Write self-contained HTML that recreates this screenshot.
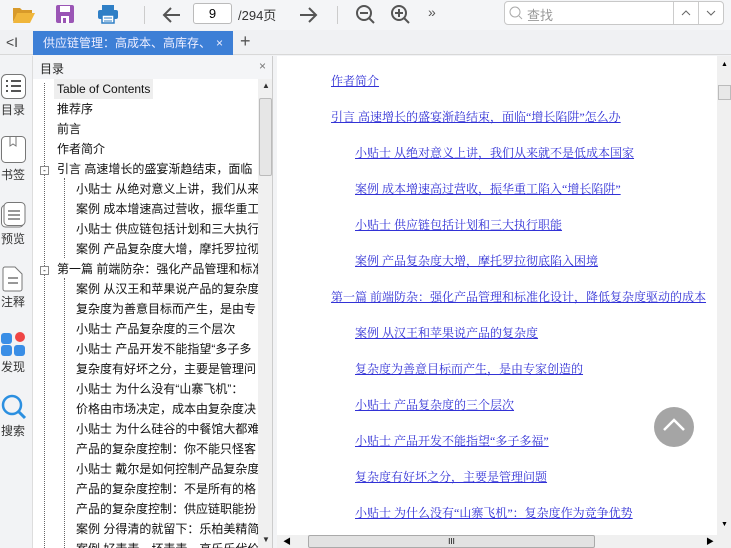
<!DOCTYPE html>
<html><head><meta charset="utf-8"><style>
*{margin:0;padding:0;box-sizing:border-box}
html,body{width:731px;height:548px;overflow:hidden}
body{background:#f2f3f5;font-family:"Liberation Sans","Noto Sans CJK SC",sans-serif;position:relative}
.a{position:absolute}
.tb{left:0;top:0;width:731px;height:30px;background:#f4f5f7}
.tabbar{left:0;top:30px;width:731px;height:25px;background:#f0f1f3;border-bottom:1px solid #d8d8d8}
.side{left:0;top:56px;width:33px;height:492px;background:#f2f3f5;border-right:1px solid #ddd}
.side .l{position:absolute;left:0;width:26px;text-align:center;font-size:12px;color:#333}
.toc{left:33px;top:56px;width:240px;height:492px;background:#fff;border-right:1px solid #ccc;overflow:hidden}
.clip{position:absolute;left:0;top:23px;width:225px;height:469px;overflow:hidden}
.toch{position:absolute;left:0;top:0;width:240px;height:23px;background:#f4f5f7;font-size:12px;padding:4px 0 0 7px;color:#222}
.row{position:absolute;font-size:12px;color:#111;white-space:nowrap;height:20px;line-height:20px}
.content{left:277px;top:56px;width:440px;height:479px;background:#fff}
.lk{position:absolute;font-family:"Liberation Serif","Noto Serif CJK SC",serif;font-size:12px;color:#3232d6;text-decoration:underline;white-space:nowrap}
</style></head><body>
<div class="a tb"></div>
<svg class="a" style="left:12px;top:4px" width="24" height="20"><path d="M1 4h7l2 2h10v3H6L1 18z" fill="#d89a2a"/><path d="M5 9h18l-5 10H1z" fill="#f0b63b"/></svg>
<svg class="a" style="left:55px;top:4px" width="20" height="20"><rect x="1" y="1" width="18" height="18" rx="2" fill="#9a55b5"/><rect x="5" y="2" width="10" height="6" fill="#fff"/><rect x="6" y="12" width="8" height="7" fill="#fff"/><rect x="8" y="14" width="3" height="5" fill="#9a55b5"/></svg>
<svg class="a" style="left:97px;top:4px" width="22" height="20"><rect x="5" y="1" width="12" height="5" fill="#2f7fc6"/><rect x="1" y="6" width="20" height="9" rx="2" fill="#2f7fc6"/><rect x="5" y="11" width="12" height="8" fill="#fff" stroke="#2f7fc6" stroke-width="1.5"/><path d="M7 14h8M7 17h8" stroke="#2f7fc6"/></svg>
<div class="a" style="left:144px;top:6px;width:1px;height:18px;background:#ccc"></div>
<svg class="a" style="left:162px;top:5px" width="20" height="20"><path d="M18 10H3M9 3l-7 7 7 7" stroke="#555" stroke-width="2" fill="none"/></svg>
<div class="a" style="left:193px;top:3px;width:39px;height:21px;border:1px solid #bbb;border-radius:3px;background:#fff;font-size:13px;text-align:center;line-height:19px">9</div>
<div class="a" style="left:238px;top:5px;font-size:13px;color:#333">/294页</div>
<svg class="a" style="left:298px;top:5px" width="20" height="20"><path d="M2 10h15M11 3l7 7-7 7" stroke="#555" stroke-width="2" fill="none"/></svg>
<div class="a" style="left:337px;top:6px;width:1px;height:18px;background:#ccc"></div>
<svg class="a" style="left:355px;top:4px" width="22" height="22"><circle cx="9" cy="9" r="7" stroke="#555" stroke-width="2" fill="none"/><path d="M5 9h8M14 14l5 5" stroke="#555" stroke-width="2"/></svg>
<svg class="a" style="left:390px;top:4px" width="22" height="22"><circle cx="9" cy="9" r="7" stroke="#555" stroke-width="2" fill="none"/><path d="M5 9h8M9 5v8M14 14l5 5" stroke="#555" stroke-width="2"/></svg>
<div class="a" style="left:428px;top:4px;font-size:14px;color:#555">»</div>
<div class="a" style="left:504px;top:1px;width:220px;height:24px;border:1px solid #c8c8c8;border-radius:4px;background:#fff"></div>
<svg class="a" style="left:509px;top:6px" width="14" height="14"><circle cx="6" cy="6" r="5" stroke="#aaa" fill="none"/><path d="M10 10l3 3" stroke="#aaa"/></svg>
<div class="a" style="left:527px;top:5px;font-size:13px;color:#999">查找</div>
<div class="a" style="left:673px;top:2px;width:1px;height:22px;background:#ccc"></div>
<div class="a" style="left:698px;top:2px;width:1px;height:22px;background:#ccc"></div>
<svg class="a" style="left:680px;top:9px" width="12" height="8"><path d="M2 6l4-4 4 4" stroke="#666" fill="none"/></svg>
<svg class="a" style="left:705px;top:9px" width="12" height="8"><path d="M2 2l4 4 4-4" stroke="#666" fill="none"/></svg>

<div class="a tabbar"></div>
<div class="a" style="left:6px;top:34px;font-size:14px;color:#444">&lt;I</div>
<div class="a" style="left:33px;top:31px;width:200px;height:24px;background:#3d7fd6;color:#eef;font-size:12px;line-height:24px;padding-left:10px;white-space:nowrap;overflow:hidden">供应链管理：高成本、高库存、<span style="position:absolute;left:183px">×</span></div>
<div class="a" style="left:240px;top:31px;font-size:18px;color:#555">+</div>

<div class="a side">
<svg class="a" style="left:1px;top:18px" width="25" height="25"><rect x="0.5" y="0.5" width="24" height="24" rx="5" fill="#fff" stroke="#777"/><path d="M5 7h2M10 7h10M5 12h2M10 12h10M5 17h2M10 17h10" stroke="#555" stroke-width="2"/></svg>
<div class="l" style="top:45px">目录</div>
<svg class="a" style="left:1px;top:80px" width="25" height="27"><rect x="0.5" y="0.5" width="24" height="26" rx="4" fill="#fff" stroke="#777"/><path d="M9 1v9l3-2 3 2V1" stroke="#777" fill="none"/></svg>
<div class="l" style="top:110px">书签</div>
<svg class="a" style="left:1px;top:146px" width="25" height="26"><rect x="0.5" y="3" width="22" height="22" rx="4" fill="#fff" stroke="#777"/><rect x="3" y="0.5" width="21" height="23" rx="4" fill="#fff" stroke="#777"/><path d="M7 9h12M7 13h12M7 17h12" stroke="#777" stroke-width="1.5"/></svg>
<div class="l" style="top:174px">预览</div>
<svg class="a" style="left:2px;top:210px" width="22" height="26"><path d="M1 3a2 2 0 012-2h10l7 7v15a2 2 0 01-2 2H3a2 2 0 01-2-2z" fill="#fff" stroke="#777"/><path d="M6 12h10M6 17h10" stroke="#777" stroke-width="1.5"/></svg>
<div class="l" style="top:237px">注释</div>
<svg class="a" style="left:1px;top:275px" width="26" height="26"><rect x="0" y="2" width="11" height="11" rx="3" fill="#3a8ee6"/><circle cx="19" cy="6" r="5" fill="#ef4545"/><rect x="0" y="14" width="11" height="11" rx="3" fill="#3a8ee6"/><rect x="13" y="14" width="11" height="11" rx="3" fill="#3a8ee6"/></svg>
<div class="l" style="top:302px">发现</div>
<svg class="a" style="left:1px;top:338px" width="26" height="28"><circle cx="11" cy="11" r="9" stroke="#2b8fe0" stroke-width="2.5" fill="none"/><path d="M18 18l6 6" stroke="#2b8fe0" stroke-width="3"/></svg>
<div class="l" style="top:366px">搜索</div>
</div>

<div class="a toc">
<div class="toch">目录<span style="position:absolute;right:7px;top:3px;color:#777">×</span></div>
<div class="clip">
<div class="a" style="left:11px;top:4px;height:465px;border-left:1px dotted #666"></div>
<div class="a" style="left:31px;top:99px;height:80px;border-left:1px dotted #666"></div>
<div class="a" style="left:31px;top:199px;height:270px;border-left:1px dotted #666"></div>
<div class="row" style="left:21px;top:0px;background:#eee;padding:0 3px">Table of Contents</div>
<div class="row" style="left:24px;top:20px">推荐序</div>
<div class="row" style="left:24px;top:40px">前言</div>
<div class="row" style="left:24px;top:60px">作者简介</div>
<div class="row" style="left:24px;top:80px">引言 高速增长的盛宴渐趋结束，面临</div>
<div class="row" style="left:43px;top:100px">小贴士 从绝对意义上讲，我们从来</div>
<div class="row" style="left:43px;top:120px">案例 成本增速高过营收，振华重工</div>
<div class="row" style="left:43px;top:140px">小贴士 供应链包括计划和三大执行</div>
<div class="row" style="left:43px;top:160px">案例 产品复杂度大增，摩托罗拉彻</div>
<div class="row" style="left:24px;top:180px">第一篇 前端防杂：强化产品管理和标准</div>
<div class="row" style="left:43px;top:200px">案例 从汉王和苹果说产品的复杂度</div>
<div class="row" style="left:43px;top:220px">复杂度为善意目标而产生，是由专</div>
<div class="row" style="left:43px;top:240px">小贴士 产品复杂度的三个层次</div>
<div class="row" style="left:43px;top:260px">小贴士 产品开发不能指望“多子多</div>
<div class="row" style="left:43px;top:280px">复杂度有好坏之分，主要是管理问</div>
<div class="row" style="left:43px;top:300px">小贴士 为什么没有“山寨飞机”：</div>
<div class="row" style="left:43px;top:320px">价格由市场决定，成本由复杂度决</div>
<div class="row" style="left:43px;top:340px">小贴士 为什么硅谷的中餐馆大都难</div>
<div class="row" style="left:43px;top:360px">产品的复杂度控制：你不能只怪客</div>
<div class="row" style="left:43px;top:380px">小贴士 戴尔是如何控制产品复杂度</div>
<div class="row" style="left:43px;top:400px">产品的复杂度控制：不是所有的格</div>
<div class="row" style="left:43px;top:420px">产品的复杂度控制：供应链职能扮</div>
<div class="row" style="left:43px;top:440px">案例 分得清的就留下：乐柏美精简</div>
<div class="row" style="left:43px;top:460px">案例 好麦麦，坏麦麦，高乐乐代价</div>
<div class="a" style="left:7px;top:87px;width:9px;height:9px;border:1px solid #888;background:#fff;font-size:8px;line-height:7px;text-align:center">-</div>
<div class="a" style="left:7px;top:187px;width:9px;height:9px;border:1px solid #888;background:#fff;font-size:8px;line-height:7px;text-align:center">-</div>
</div>
<div class="a" style="left:225px;top:23px;width:15px;height:469px;background:#f0f0f0"></div>
<div class="a" style="left:226px;top:42px;width:13px;height:78px;background:#e6e6e6;border:1px solid #bbb;border-radius:2px"></div>
<div class="a" style="left:229px;top:25px;font-size:8px;color:#333">▲</div>
<div class="a" style="left:229px;top:479px;font-size:8px;color:#333">▼</div>
</div>

<div class="a content">
<div class="lk" style="left:54px;top:16px">作者简介</div>
<div class="lk" style="left:54px;top:52px">引言  高速增长的盛宴渐趋结束，面临“增长陷阱”怎么办</div>
<div class="lk" style="left:78px;top:88px">小贴士  从绝对意义上讲，我们从来就不是低成本国家</div>
<div class="lk" style="left:78px;top:124px">案例  成本增速高过营收，振华重工陷入“增长陷阱”</div>
<div class="lk" style="left:78px;top:160px">小贴士  供应链包括计划和三大执行职能</div>
<div class="lk" style="left:78px;top:196px">案例  产品复杂度大增，摩托罗拉彻底陷入困境</div>
<div class="lk" style="left:54px;top:232px">第一篇  前端防杂：强化产品管理和标准化设计，降低复杂度驱动的成本</div>
<div class="lk" style="left:78px;top:268px">案例  从汉王和苹果说产品的复杂度</div>
<div class="lk" style="left:78px;top:304px">复杂度为善意目标而产生，是由专家创造的</div>
<div class="lk" style="left:78px;top:340px">小贴士  产品复杂度的三个层次</div>
<div class="lk" style="left:78px;top:376px">小贴士  产品开发不能指望“多子多福”</div>
<div class="lk" style="left:78px;top:412px">复杂度有好坏之分，主要是管理问题</div>
<div class="lk" style="left:78px;top:448px">小贴士  为什么没有“山寨飞机”：复杂度作为竞争优势</div>
</div>
<div class="a" style="left:654px;top:407px;width:40px;height:40px;border-radius:50%;background:#a5a5a5"></div>
<svg class="a" style="left:662px;top:417px" width="24" height="16"><path d="M2 13l10-10 10 10" stroke="#fff" stroke-width="2.5" fill="none"/></svg>
<div class="a" style="left:717px;top:56px;width:14px;height:479px;background:#f0f0f0"></div>
<div class="a" style="left:718px;top:85px;width:13px;height:15px;background:#e8e8e8;border:1px solid #bbb"></div>
<div class="a" style="left:721px;top:61px;font-size:7px">▲</div>
<div class="a" style="left:721px;top:521px;font-size:7px">▼</div>
<div class="a" style="left:277px;top:535px;width:454px;height:13px;background:#f0f0f0"></div>
<div class="a" style="left:308px;top:535px;width:287px;height:13px;background:#e2e2e2;border:1px solid #aaa;border-radius:2px;font-size:8px;text-align:center;line-height:11px">III</div>
<div class="a" style="left:283px;top:536px;font-size:8px">◀</div>
<div class="a" style="left:706px;top:536px;font-size:8px">▶</div>
</body></html>
